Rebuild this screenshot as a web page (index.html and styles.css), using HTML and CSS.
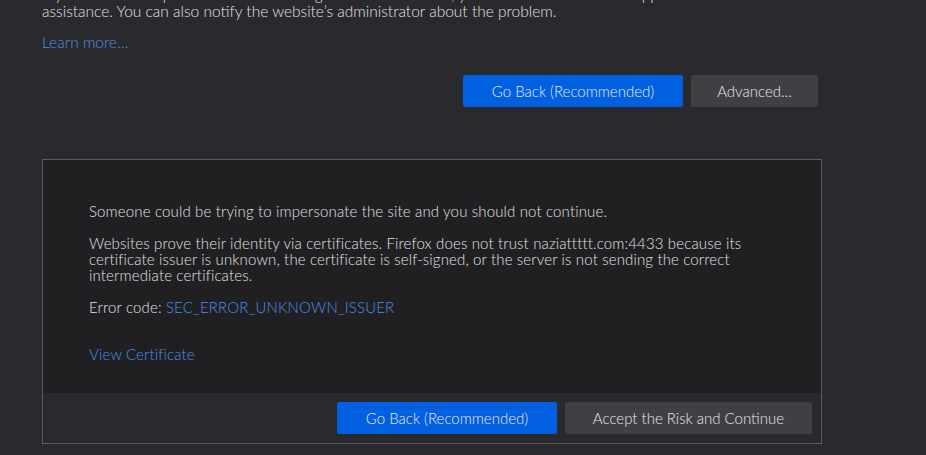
FILE: index.html
```html
<!DOCTYPE html>
<html>
<head>
<meta charset="utf-8">
<link rel="stylesheet" href="styles.css">
</head>
<body>
<main class="page">
  <p class="intro">If you are on a corporate network or using anti-virus software, you can reach out to the support teams for<br>assistance. You can also notify the website’s administrator about the problem.</p>
  <p class="learn"><a href="#">Learn more…</a></p>
  <div class="actions">
    <button class="btn primary">Go Back (Recommended)</button>
    <button class="btn secondary">Advanced…</button>
  </div>
  <section class="advanced">
    <div class="advanced-body">
      <p>Someone could be trying to impersonate the site and you should not continue.</p>
      <p>Websites prove their identity via certificates. Firefox does not trust naziattttt.com:4433 because its<br>certificate issuer is unknown, the certificate is self-signed, or the server is not sending the correct<br>intermediate certificates.</p>
      <p>Error code: <a href="#">SEC_ERROR_UNKNOWN_ISSUER</a></p>
      <p class="view"><a href="#">View Certificate</a></p>
    </div>
    <div class="advanced-footer">
      <button class="btn primary wide">Go Back (Recommended)</button>
      <button class="btn secondary risk">Accept the Risk and Continue</button>
    </div>
  </section>
</main>
</body>
</html>
```
FILE: styles.css
```css
html, body {
  margin: 0;
  padding: 0;
  background: #2a2a2e;
  height: 100%;
  overflow: hidden;
}
body {
  font-family: "Lato", "Open Sans", sans-serif;
  font-weight: 300;
  font-size: 15px;
  color: #e0e0e3;
}
.page {
  width: 780px;
  padding-left: 42px;
  margin-top: -14px;
}
p { margin: 0; }
a { color: #4a8fe6; text-decoration: none; }
.intro { line-height: 17px; font-size: 15.5px; }
.learn { margin-top: 13px; line-height: 18px; font-size: 15.5px; }
.actions {
  display: flex;
  justify-content: flex-end;
  gap: 8px;
  margin-top: 24px;
  padding-right: 4px;
}
.btn {
  font: inherit;
  font-size: 15px;
  color: #e8e8eb;
  border: none;
  border-radius: 2px;
  height: 32px;
  padding: 0 16px;
}
.primary { background: #0060df; width: 220px; }
.secondary { background: #404044; width: 127px; }
.advanced {
  margin-top: 52px;
  border: 1px solid #5a5a5f;
  background: #202023;
}
.advanced-body {
  padding: 43px 46px 31px;
  line-height: 16px;
  letter-spacing: 0.15px;
}
.advanced-body p + p { margin-top: 16px; }
.advanced-body .view { margin-top: 31px; }
.advanced-footer {
  background: #2a2a2e;
  display: flex;
  justify-content: flex-end;
  gap: 8px;
  padding: 9px 9px 9px 0;
}
.risk { width: 247px; }
```
